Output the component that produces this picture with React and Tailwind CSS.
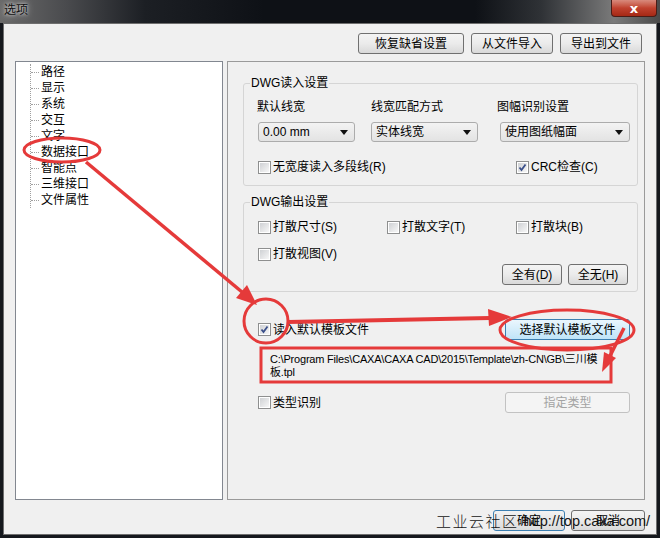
import clsx from 'clsx';

const treeItems = ['路径', '显示', '系统', '交互', '文字', '数据接口', '智能点', '三维接口', '文件属性'];

const Btn = ({ children, className, blue, disabled }) => (
  <div
    className={clsx(
      'flex items-center justify-center h-[21px] rounded-[3px] border text-[12px] leading-none',
      disabled
        ? 'border-[#c2c2c2] bg-[#f4f4f4] text-[#a3a3a3]'
        : blue
        ? 'border-[#3c7fb1] bg-linear-to-b from-[#eaf6fd] to-[#bfe4f8] text-black'
        : 'border-[#707070] bg-linear-to-b from-[#f4f4f4] via-[#ebebeb] to-[#d9d9d9] text-black',
      className
    )}
  >
    {children}
  </div>
);

const Check = ({ checked, label, className }) => (
  <div className={clsx('flex items-center h-[16px] text-[12px] leading-none', className)}>
    <div className="w-[13px] h-[13px] border border-[#8e8f8f] bg-white p-[1px] shrink-0">
      <div className="w-full h-full bg-linear-to-br from-[#cfd1d4] to-[#f7f7f7] flex items-center justify-center">
        {checked && (
          <svg width="9" height="9" viewBox="0 0 9 9">
            <path d="M1.5 4.5 L3.5 7 L7.5 1.5" fill="none" stroke="#3a4f8a" strokeWidth="1.8" />
          </svg>
        )}
      </div>
    </div>
    <span className="ml-[2px] whitespace-nowrap">{label}</span>
  </div>
);

const Select = ({ value, className }) => (
  <div className={clsx('flex items-center justify-between h-[20px] px-[4px] border border-[#acacac] rounded-[3px] bg-linear-to-b from-[#f3f3f3] to-[#e3e3e3] text-[12px] leading-none', className)}>
    <span>{value}</span>
    <svg width="8" height="5" viewBox="0 0 8 5" className="mr-[2px]">
      <path d="M0 0 H8 L4 5 Z" fill="#111" />
    </svg>
  </div>
);

const Group = ({ title, children, className }) => (
  <fieldset className={clsx('border border-[#d5d5d5] rounded-[3px] ml-[15px] mr-[6px]', className)}>
    <legend className="ml-[6px] px-[1px] text-[12px] leading-[14px]">{title}</legend>
    {children}
  </fieldset>
);

const Annotations = () => (
  <svg className="absolute inset-0 pointer-events-none" width="660" height="538" viewBox="0 0 660 538">
    <g fill="none" stroke="#e53a3a" strokeWidth="3">
      <ellipse cx="62" cy="150" rx="38" ry="12" />
      <line x1="86" y1="162" x2="242" y2="292" strokeWidth="3.5" />
      <circle cx="266" cy="321" r="22" />
      <line x1="288" y1="322" x2="490" y2="318" strokeWidth="4" />
      <ellipse cx="567" cy="330" rx="67" ry="20" />
      <rect x="261" y="348" width="350" height="34" />
      <line x1="624" y1="328" x2="610" y2="356" strokeWidth="3.5" />
    </g>
    <g fill="#e53a3a">
      <polygon points="257,305 236,298 247,285" />
      <polygon points="512,317 488,309 489,326" />
      <polygon points="602,372 616,358 604,352" />
    </g>
  </svg>
);

export default function App() {
  return (
    <div className="relative w-[660px] h-[538px] overflow-hidden bg-[#15181d] font-['Liberation_Sans','Noto_Sans_CJK_SC',sans-serif] text-black">
      <div className="flex justify-between h-[23px] bg-[linear-gradient(90deg,#6a6a6a_0%,#4a4b4e_10%,#1c1f24_22%,#0e1116_40%,#0e1116_72%,#2f3236_82%,#7a7a7a_93%,#4a4a4a_100%)]">
        <span className="ml-[4px] mt-[3px] text-[12px] leading-[14px] text-[#111] [text-shadow:0_0_6px_#ddd,0_0_3px_#ccc]">选项</span>
        <div className="mr-[3px] w-[46px] h-[17px] rounded-b-[4px] border border-t-0 border-[#4a1c16] bg-linear-to-b from-[#d88a7c] via-[#c0412e] to-[#a52814] flex items-center justify-center">
          <span className="text-white font-bold text-[13px] leading-none font-['DejaVu_Sans',sans-serif]">x</span>
        </div>
      </div>
      <div className="ml-[3px] mr-[3px] h-[512px] border border-[#6e6e6e] bg-[#f0f0f0] flex flex-col">
        <div className="flex justify-end gap-[7px] pt-[9px] pr-[14px]">
          <Btn className="w-[106px]">恢复缺省设置</Btn>
          <Btn className="w-[82px]">从文件导入</Btn>
          <Btn className="w-[82px]">导出到文件</Btn>
        </div>
        <div className="flex mt-[7px] pl-[11px] gap-[4px]">
          <div className="w-[208px] h-[439px] border border-[#828790] bg-white pt-[2px] pl-[14px]">
            <div className="my-[8px] border-l border-dotted border-[#a0a0a0]">
              <div className="-my-[8px]">
                {treeItems.map((t) => (
                  <div key={t} className="flex items-center h-[16px]">
                    <span className="w-[8px] border-t border-dotted border-[#a0a0a0]" />
                    <span className="ml-[2px] text-[12px] leading-none">{t}</span>
                  </div>
                ))}
              </div>
            </div>
          </div>
          <div className="w-[418px] h-[439px] border border-[#9a9a9a] flex flex-col">
            <Group title="DWG读入设置" className="mt-[14px]">
              <div className="pt-[9px] pb-[10px] pl-[13px]">
                <div className="flex h-[16px] items-center text-[12px] leading-none">
                  <span className="w-[114px]">默认线宽</span>
                  <span className="w-[126px]">线宽匹配方式</span>
                  <span>图幅识别设置</span>
                </div>
                <div className="flex mt-[7px]">
                  <Select value="0.00 mm" className="w-[97px] ml-[1px]" />
                  <Select value="实体线宽" className="w-[107px] ml-[16px]" />
                  <Select value="使用图纸幅面" className="w-[130px] ml-[22px]" />
                </div>
                <div className="flex mt-[17px] pl-[1px]">
                  <Check label="无宽度读入多段线(R)" className="w-[258px]" />
                  <Check checked label="CRC检查(C)" />
                </div>
              </div>
            </Group>
            <Group title="DWG输出设置" className="mt-[9px]">
              <div className="pt-[10px] pb-[6px] pl-[14px] pr-[9px]">
                <div className="flex">
                  <Check label="打散尺寸(S)" className="w-[129px]" />
                  <Check label="打散文字(T)" className="w-[129px]" />
                  <Check label="打散块(B)" />
                </div>
                <Check label="打散视图(V)" className="mt-[11px]" />
                <div className="flex justify-end gap-[6px] mt-[2px]">
                  <Btn className="w-[60px]">全有(D)</Btn>
                  <Btn className="w-[60px]">全无(H)</Btn>
                </div>
              </div>
            </Group>
            <div className="flex items-center justify-between mt-[27px] pl-[30px] pr-[14px]">
              <Check checked label="读入默认模板文件" />
              <Btn blue className="w-[125px]">选择默认模板文件</Btn>
            </div>
            <div className="mt-[13px] pl-[42px] text-[11px] leading-[13px] tracking-[-0.2px] whitespace-nowrap">
              C:\Program Files\CAXA\CAXA CAD\2015\Template\zh-CN\GB\三川模<br />板.tpl
            </div>
            <div className="flex items-center justify-between mt-[13px] pl-[30px] pr-[14px]">
              <Check label="类型识别" />
              <Btn disabled className="w-[125px]">指定类型</Btn>
            </div>
          </div>
        </div>
        <div className="flex justify-end gap-[6px] mt-[10px] pr-[11px]">
          <Btn blue className="w-[72px] from-[#f2f2f2] to-[#dcdcdc]">确定</Btn>
          <Btn className="w-[74px]">取消</Btn>
        </div>
      </div>
      <Annotations />
      <div className="absolute left-[436px] top-[511px] flex items-center text-[15px] leading-[20px] text-[#141414]">
        <span className="tracking-[1.5px] font-['Noto_Sans_CJK_SC',sans-serif] font-light">工业云社区</span>
        <span className="ml-[5px] text-[14.5px]">http://top.caxa.com/</span>
      </div>
    </div>
  );
}
